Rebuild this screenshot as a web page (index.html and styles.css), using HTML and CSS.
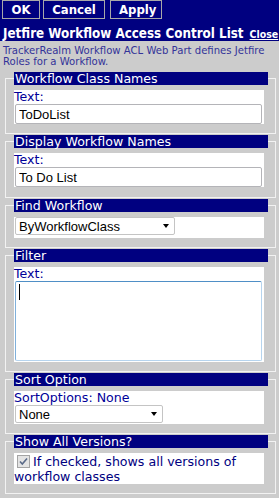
FILE: index.html
```html
<!DOCTYPE html>
<html lang="en">
  <head>
    <meta charset="UTF-8" />
    <title>Jetfire Workflow Access Control List</title>
    <link rel="stylesheet" href="styles.css">
  </head>

  <body>
    <!-- Toolbar + title -->
    <div class="topbar">
      <div class="actions">
        <button class="btn btn-ok">OK</button>
        <button class="btn btn-cancel">Cancel</button>
        <button class="btn btn-apply">Apply</button>
      </div>
      <div class="title-row">
        <span class="title">Jetfire Workflow Access Control List</span>
        <a class="close" href="#">Close</a>
      </div>
    </div>

    <p class="desc">
      TrackerRealm Workflow ACL Web Part defines Jetfire Roles for a Workflow.
    </p>

    <div class="panels">
      <fieldset class="panel">
        <legend>Workflow Class Names</legend>
        <div class="field">
          <label>Text:</label>
          <input type="text" value="ToDoList" />
        </div>
      </fieldset>

      <fieldset class="panel panel-display">
        <legend>Display Workflow Names</legend>
        <div class="field">
          <label>Text:</label>
          <input type="text" value="To Do List" />
        </div>
      </fieldset>

      <fieldset class="panel">
        <legend>Find Workflow</legend>
        <div class="field field-find">
          <span class="select select-find">
            <select>
              <option>ByWorkflowClass</option>
            </select>
          </span>
        </div>
      </fieldset>

      <fieldset class="panel">
        <legend>Filter</legend>
        <div class="field">
          <label>Text:</label>
          <div class="area-wrap">
            <textarea></textarea>
            <span class="caret"></span>
          </div>
        </div>
      </fieldset>

      <fieldset class="panel">
        <legend>Sort Option</legend>
        <div class="field field-sort">
          <label>SortOptions: None</label>
          <span class="select select-sort">
            <select>
              <option>None</option>
            </select>
          </span>
        </div>
      </fieldset>

      <fieldset class="panel">
        <legend>Show All Versions?</legend>
        <div class="field check-field">
          <span class="check">
            <svg width="11" height="11" viewBox="0 0 11 11">
              <path d="M2 5.5 L4.3 8 L9 2.5" fill="none" stroke="#5a6a88" stroke-width="1.6" />
            </svg>
          </span>If checked, shows all versions of workflow classes
        </div>
      </fieldset>
    </div>
  </body>
</html>
```

FILE: styles.css
```css
* {
  margin: 0;
  padding: 0;
  box-sizing: border-box;
}

body {
  background-color: #cccccc;
  font-family: "DejaVu Sans", Verdana, sans-serif;
  width: 279px;
}

.topbar {
  background-color: #000080;
  height: 41px;
}

.actions {
  display: flex;
  padding: 0 0 0 2px;
}

.btn {
  height: 19px;
  background-color: #000080;
  color: #fff;
  border: 1px solid #a8a8a8;
  font-family: "DejaVu Sans Condensed", "DejaVu Sans", sans-serif;
  font-weight: bold;
  font-size: 13px;
  line-height: 17px;
  padding: 0 8px;
  cursor: pointer;
}

.btn-ok {
  width: 38px;
  margin-right: 3px;
}

.btn-cancel {
  width: 62px;
  margin-right: 5px;
}

.btn-apply {
  width: 52px;
}

.title-row {
  display: flex;
  align-items: baseline;
  padding: 7px 0 0 3px;
  color: #fff;
}

.title {
  font-family: "DejaVu Sans Condensed", "DejaVu Sans", sans-serif;
  font-weight: bold;
  font-size: 13.3px;
}

.close {
  margin-left: 6px;
  color: #fff;
  font-family: "DejaVu Sans Condensed", "DejaVu Sans", sans-serif;
  font-weight: bold;
  font-size: 10.5px;
  text-decoration: underline;
}

.desc {
  padding: 4px 3px 0;
  font-family: "DejaVu Sans", Verdana, sans-serif;
  font-size: 10.1px;
  line-height: 11px;
  color: #333399;
  height: 31px;
}

.panels {
  padding-left: 5px;
}

fieldset.panel {
  width: 271px;
  min-width: 0;
  border: 1px solid #f2f2f2;
  padding: 5px 7px 9px 8px;
  margin-bottom: 1px;
}

fieldset.panel-display {
  padding-bottom: 10px;
}

fieldset.panel legend {
  width: 254px;
  height: 13px;
  line-height: 13px;
  padding: 0 2px 0 1px;
  background-color: #000080;
  color: #fff;
  font-size: 12.6px;
}

.field {
  width: 250px;
  background-color: #fff;
  display: flex;
  flex-direction: column;
  align-items: flex-start;
}

.field label {
  font-size: 12.6px;
  line-height: 14px;
  color: #000099;
}

.field input {
  margin-left: 1px;
  width: 247px;
  height: 20px;
  border: 1px solid #b4b4b8;
  border-radius: 2px;
  padding: 0 3px;
  font-family: "Liberation Sans", Arial, sans-serif;
  font-size: 13px;
  color: #000;
}

.select {
  position: relative;
  display: block;
  margin-left: 1px;
}

.select select {
  appearance: none;
  -webkit-appearance: none;
  display: block;
  height: 18px;
  border: 1px solid #c4c4c4;
  border-radius: 2px;
  background: #fff;
  padding: 0 3px;
  font-family: "Liberation Sans", Arial, sans-serif;
  font-size: 13px;
  color: #000;
}

.select::after {
  content: "";
  position: absolute;
  right: 6px;
  top: 7px;
  border-left: 3.5px solid transparent;
  border-right: 3.5px solid transparent;
  border-top: 4px solid #000;
}

.field-find {
  padding-bottom: 3px;
}

.select-find select {
  width: 160px;
}

.select-sort select {
  width: 148px;
}

.field-sort {
  padding-bottom: 1px;
}

.area-wrap {
  position: relative;
  margin-left: 1px;
  margin-bottom: 1px;
}

.area-wrap textarea {
  display: block;
  width: 247px;
  height: 80px;
  resize: none;
  border: 1px solid #b6d4ee;
  border-top-color: #4f8fc6;
  border-left-color: #80b0da;
  border-radius: 2px;
  outline: none;
}

.caret {
  position: absolute;
  left: 4px;
  top: 3px;
  width: 1px;
  height: 16px;
  background-color: #000;
}

.check-field {
  display: block;
  font-size: 12.6px;
  line-height: 15px;
  color: #000080;
  padding-top: 1px;
}

.check {
  display: inline-block;
  width: 13px;
  height: 13px;
  margin: 0 3px 0 3px;
  vertical-align: -2px;
  border: 1px solid #a4a4a4;
  background-color: #e4e4e4;
}

.check svg {
  display: block;
  margin: 0;
}
```
